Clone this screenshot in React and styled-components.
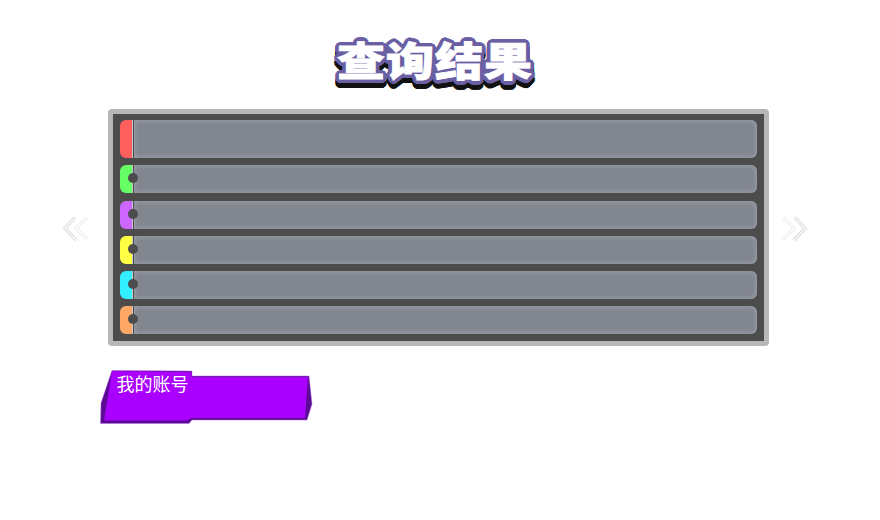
import React from 'react';
import styled, { createGlobalStyle } from 'styled-components';

const GlobalStyle = createGlobalStyle`
  html, body {
    margin: 0;
    background: #fff;
    font-family: "Noto Sans CJK SC", "Liberation Sans", sans-serif;
  }
`;

// round outline for the title, rings of shadows for purple and one for black
const ring = (r, dx, dy, color) =>
  Array.from({ length: 32 }, (_, i) => {
    const a = (i / 32) * Math.PI * 2;
    return `${(dx + Math.cos(a) * r).toFixed(2)}px ${(dy + Math.sin(a) * r * 1.2).toFixed(2)}px 0 ${color}`;
  }).join(', ');

const purple = '#6a5fa3';
const titleShadow = [
  ring(2, 0, 0, purple),
  ring(4, 0, 0, purple),
  ring(4, 0, 6, '#111'),
  ring(2, 0, 7, '#111'),
].join(', ');

const Page = styled.div`
  width: 880px;
  height: 520px;
  overflow: hidden;
  padding-top: 26px;
  box-sizing: border-box;
`;

const Title = styled.h1`
  margin: 0 10px 0 0;
  height: 83px;
  text-align: center;
  font-size: 48px;
  line-height: 66px;
  font-weight: 900;
`;

const TitleText = styled.span`
  display: inline-block;
  letter-spacing: 1px;
  color: #fff;
  -webkit-text-stroke: 1px #fff;
  text-shadow: ${titleShadow};
  transform: scaleY(0.82);
`;

const Stage = styled.div`
  display: flex;
  align-items: center;
  padding-left: 62px;
`;

const Arrow = styled.svg`
  width: 28px;
  height: 28px;
  flex: none;
  margin: ${p => (p.$right ? '0 0 0 11px' : '0 18px 0 0')};
`;

const Panel = styled.div`
  width: 661px;
  height: 237px;
  box-sizing: border-box;
  border: 5px solid #b7b7b7;
  border-radius: 4px;
  background: #4c4c4c;
  padding: 6px 7px;
  display: flex;
  flex-direction: column;
`;

const Row = styled.div`
  height: ${p => (p.$tall ? 38 : 28)}px;
  margin-bottom: ${p => p.$gap}px;
  display: flex;
  position: relative;
  flex: none;
`;

const Tag = styled.div`
  width: 12px;
  background: ${p => p.$color};
  border-radius: 6px 0 0 6px;
  border-right: 1px solid #c8c8c8;
`;

const Bar = styled.div`
  flex: 1;
  margin-left: 1px;
  background: #82868f;
  border-radius: 0 6px 6px 0;
  box-shadow: inset 0 0 4px 1px #9a9eaa;
`;

const Dot = styled.span`
  position: absolute;
  left: 8px;
  top: 8px;
  width: 10px;
  height: 10px;
  border-radius: 50%;
  background: #4c4c4c;
`;

const Account = styled.div`
  position: relative;
  width: 214px;
  height: 56px;
  margin: 24px 0 0 100px;
`;

const AccountShape = styled.svg`
  position: absolute;
  inset: 0;
`;

const AccountLabel = styled.span`
  position: relative;
  display: block;
  padding: 0 0 0 16.5px;
  font-size: 18px;
  line-height: 27px;
  color: #fff;
`;

const rows = [
  { color: '#ff5f5f', tall: true, gap: 7 },
  { color: '#66ff66', gap: 8 },
  { color: '#cc66ff', gap: 7 },
  { color: '#ffff44', gap: 7 },
  { color: '#33eeff', gap: 7 },
  { color: '#ffa866', gap: 0 },
];

const Chevrons = ({ right }) => (
  <Arrow $right={right} viewBox="0 0 28 28" fill="none">
    <g transform={right ? 'translate(28 0) scale(-1 1)' : undefined}>
      <path d="M13 3.500 L3 14.500 L14 26" stroke="#cccccc" strokeWidth="3" />
      <path d="M13 3.500 L3 14.500 L14 26" stroke="#fff" strokeWidth="1.500" />
      <path d="M25 3.500 L14 14.500 L26 26" stroke="#e6e6e6" strokeWidth="3" />
      <path d="M25 3.500 L14 14.500 L26 26" stroke="#fff" strokeWidth="1.500" />
    </g>
  </Arrow>
);

export default function App() {
  return (
    <Page>
      <GlobalStyle />
      <Title>
        <TitleText>查询结果</TitleText>
      </Title>
      <Stage>
        <Chevrons />
        <Panel>
          {rows.map(r => (
            <Row key={r.color} $tall={r.tall} $gap={r.gap}>
              <Tag $color={r.color} />
              <Bar />
              {!r.tall && <Dot />}
            </Row>
          ))}
        </Panel>
        <Chevrons right />
      </Stage>
      <Account>
        <AccountShape width="214" height="56" viewBox="100 370 214 56">
          <path d="M112 370.500 L192 371 L192 376 L309 376 L312 404 L307 420 L192 420 L189 423.500 L100.500 423.500 L101 403 Z" fill="#5b0a94" stroke="#b56be0" strokeWidth="0.500" />
          <path d="M112 371 L191.500 372 L191.500 377 L308 377 L305 418 L191 418 L187 420.500 L104 420.500 Z" fill="#aa00ff" />
        </AccountShape>
        <AccountLabel>我的账号</AccountLabel>
      </Account>
    </Page>
  );
}
